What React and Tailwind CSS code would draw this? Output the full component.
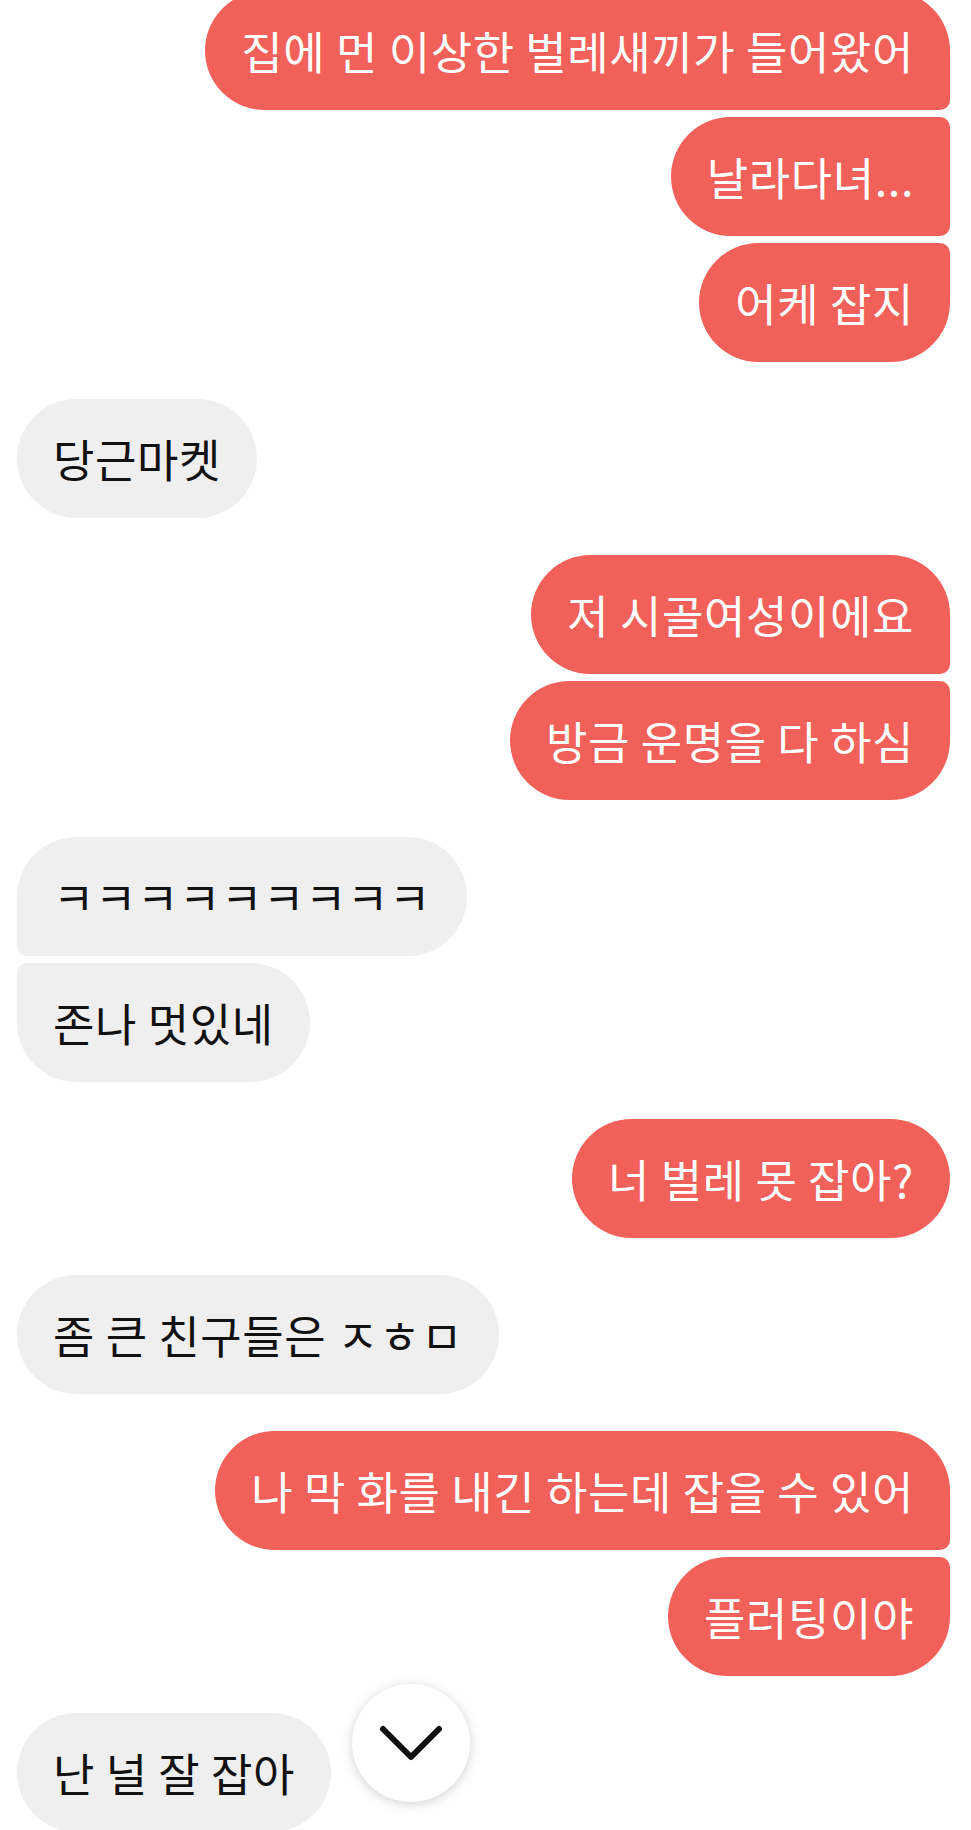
import React from 'react';

const messages = [
  { group: [{ me: true, text: '집에 먼 이상한 벌레새끼가 들어왔어' }, { me: true, text: '날라다녀...' }, { me: true, text: '어케 잡지' }] },
  { group: [{ me: false, text: '당근마켓' }] },
  { group: [{ me: true, text: '저 시골여성이에요' }, { me: true, text: '방금 운명을 다 하심' }] },
  { group: [{ me: false, text: 'ㅋㅋㅋㅋㅋㅋㅋㅋㅋ' }, { me: false, text: '존나 멋있네' }] },
  { group: [{ me: true, text: '너 벌레 못 잡아?' }] },
  { group: [{ me: false, text: '좀 큰 친구들은 ㅈㅎㅁ' }] },
  { group: [{ me: true, text: '나 막 화를 내긴 하는데 잡을 수 있어' }, { me: true, text: '플러팅이야' }] },
  { group: [{ me: false, text: '난 널 잘 잡아' }] },
];

function Bubble({ me, text, first, last }) {
  // corners next to a neighbour in the same group get the small radius
  let corners = '';
  if (me) {
    corners = (first ? 'rounded-tr-[60px] ' : 'rounded-tr-[10px] ') + (last ? 'rounded-br-[60px]' : 'rounded-br-[10px]');
  } else {
    corners = (first ? 'rounded-tl-[60px] ' : 'rounded-tl-[10px] ') + (last ? 'rounded-bl-[60px]' : 'rounded-bl-[10px]');
  }
  const side = me
    ? 'self-end bg-[#f2605a] text-white rounded-tl-[60px] rounded-bl-[60px]'
    : 'self-start bg-[#efefef] text-[#111111] rounded-tr-[60px] rounded-br-[60px]';

  return (
    <div className={`${side} ${corners} h-[119px] px-[36px] flex items-center text-[45px] tracking-[0.6px] leading-none whitespace-nowrap`}>
      {text}
    </div>
  );
}

export default function App() {
  return (
    <div
      className="relative w-[971px] h-[1830px] overflow-hidden bg-white"
      style={{ fontFamily: '"Noto Sans CJK KR", "Noto Sans", sans-serif' }}
    >
      <div className="flex flex-col gap-[37px] pl-[17px] pr-[21px] -mt-[9px]">
        {messages.map((m, i) => (
          <div key={i} className="flex flex-col gap-[7px]">
            {m.group.map((b, j) => (
              <Bubble key={j} me={b.me} text={b.text} first={j === 0} last={j === m.group.length - 1} />
            ))}
          </div>
        ))}
      </div>

      <button className="absolute left-[352px] top-[1684px] w-[118px] h-[118px] rounded-full bg-white shadow-[0_2px_12px_rgba(0,0,0,0.18)] flex items-center justify-center">
        <svg width="118" height="118" viewBox="0 0 118 118" fill="none">
          <path d="M31 45 L59 73 L87 45" stroke="#111" strokeWidth="6" strokeLinecap="round" strokeLinejoin="round" />
        </svg>
      </button>
    </div>
  );
}
